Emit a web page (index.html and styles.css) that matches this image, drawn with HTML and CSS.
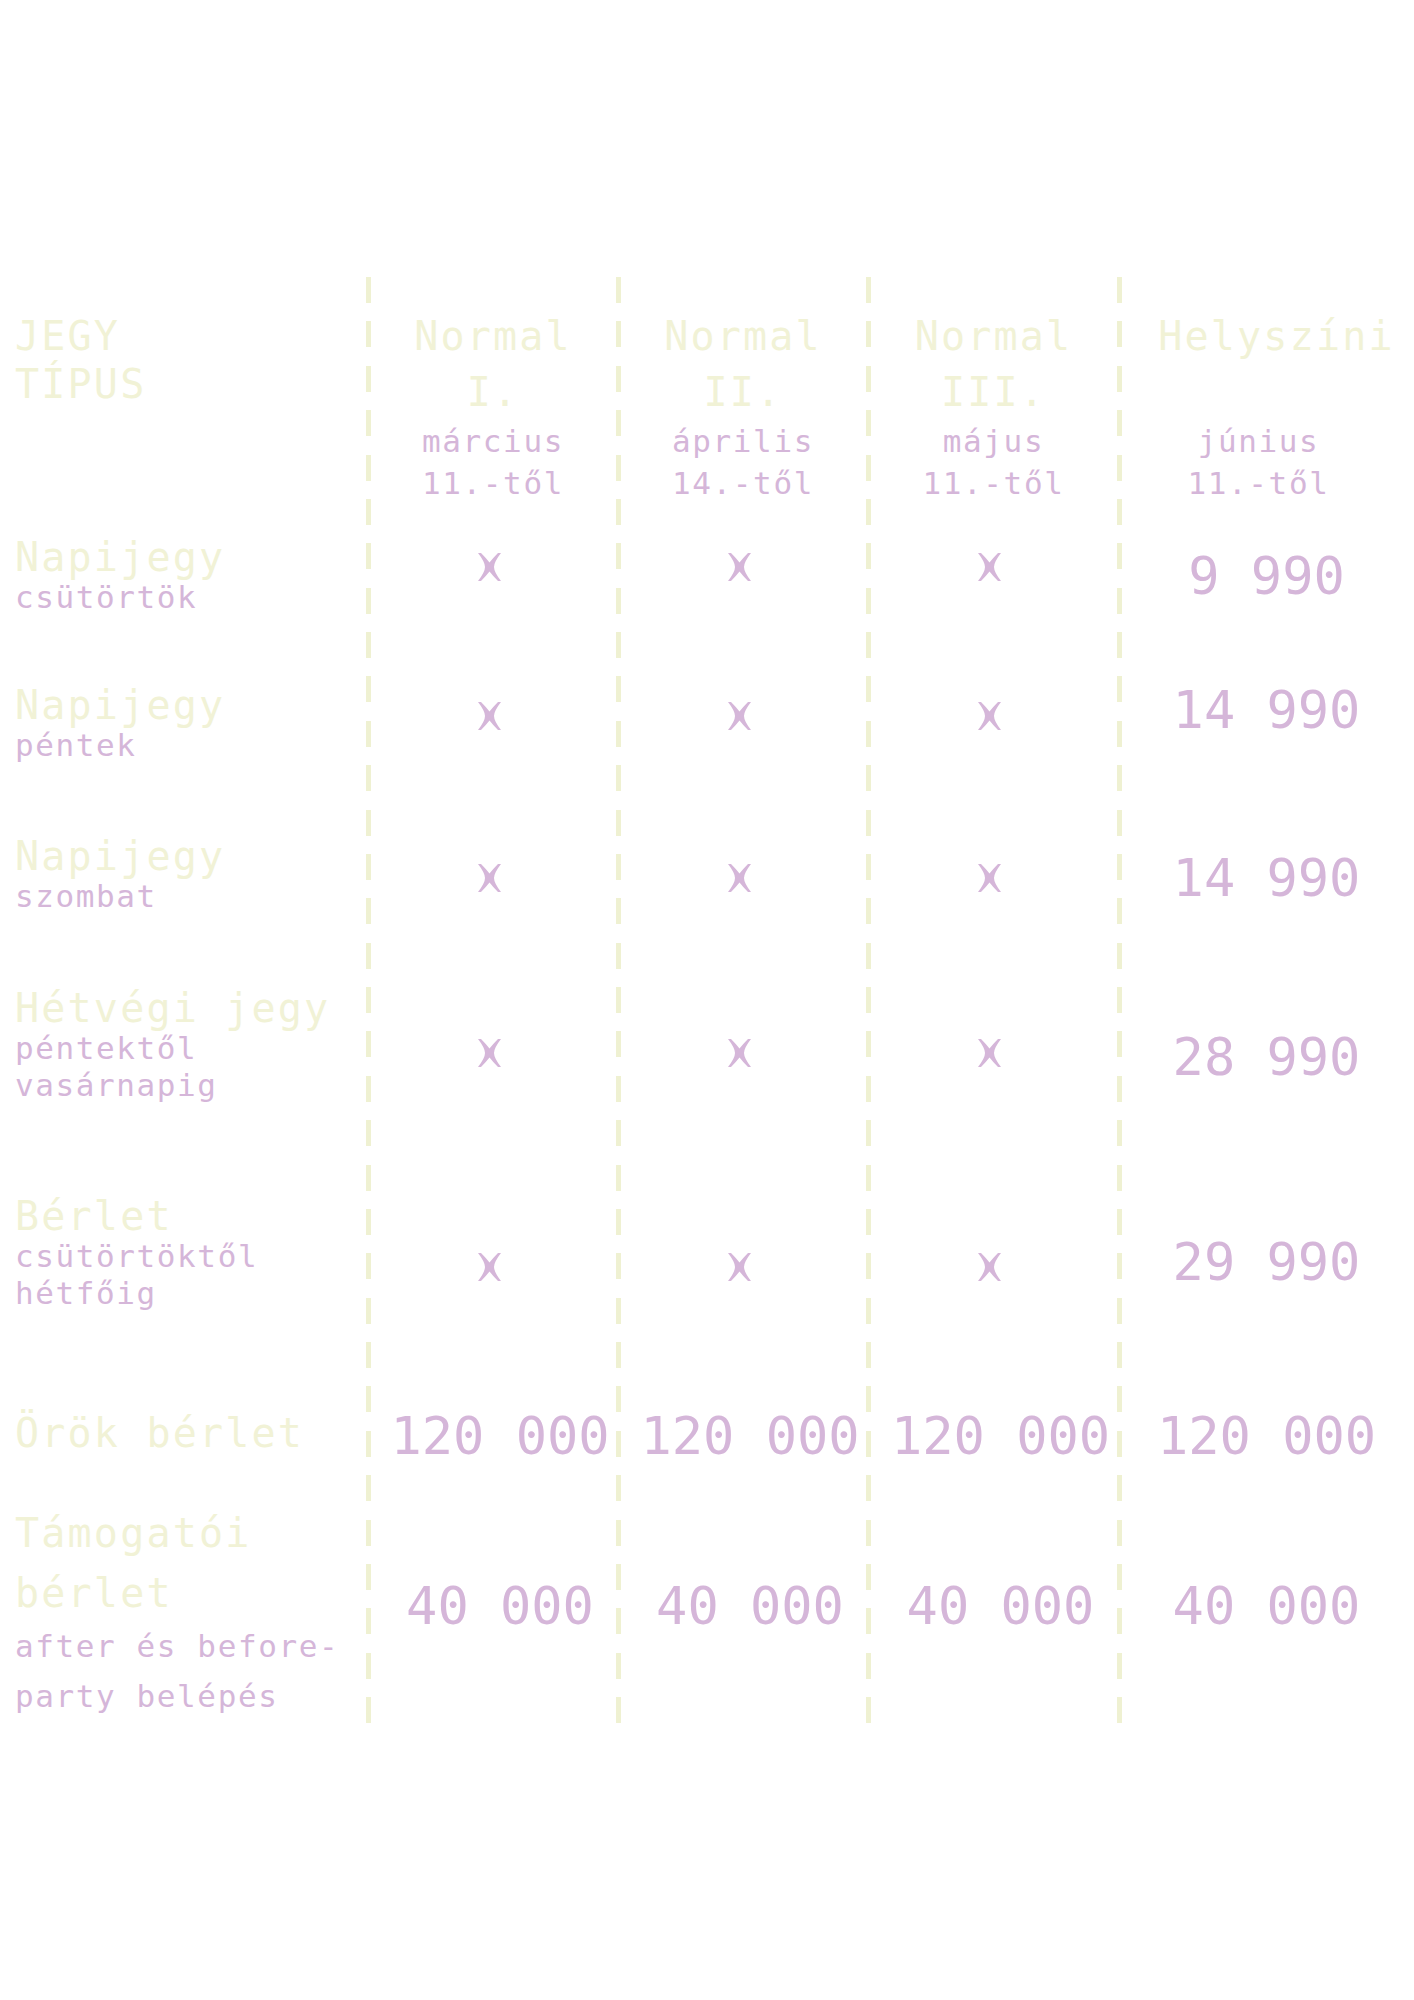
FILE: index.html
```html
<!DOCTYPE html>
<html lang="hu">
<head>
<meta charset="utf-8">
<title>Jegyárak</title>
<link rel="stylesheet" href="styles.css">
</head>
<body>
<main class="pricing">
  <!-- header row -->
  <div class="label label--head">
    <span class="big">JEGY</span>
    <span class="big">TÍPUS</span>
  </div>
  <div class="head">
    <div class="head-title"><span>Normal</span><span>I.</span></div>
    <span class="sub">március</span>
    <span class="sub">11.-től</span>
  </div>
  <div class="head">
    <div class="head-title"><span>Normal</span><span>II.</span></div>
    <span class="sub">április</span>
    <span class="sub">14.-től</span>
  </div>
  <div class="head">
    <div class="head-title"><span>Normal</span><span>III.</span></div>
    <span class="sub">május</span>
    <span class="sub">11.-től</span>
  </div>
  <div class="head head--last">
    <div class="head-title"><span>Helyszíni</span></div>
    <span class="sub">június</span>
    <span class="sub">11.-től</span>
  </div>

  <!-- Napijegy csütörtök -->
  <div class="label label--r1"><span class="big">Napijegy</span><span class="sub">csütörtök</span></div>
  <div class="mark mark--up"><svg class="x" viewBox="0 0 23 28"><path d="M0,0 L3,0 Q8,5 11.5,9.5 Q15,5 20,0 L23,0 Q16,9 16,14 Q16,19 23,28 L20,28 Q15,23 11.5,18.5 Q8,23 3,28 L0,28 Q7,19 7,14 Q7,9 0,0 Z"/></svg></div>
  <div class="mark mark--up"><svg class="x" viewBox="0 0 23 28"><path d="M0,0 L3,0 Q8,5 11.5,9.5 Q15,5 20,0 L23,0 Q16,9 16,14 Q16,19 23,28 L20,28 Q15,23 11.5,18.5 Q8,23 3,28 L0,28 Q7,19 7,14 Q7,9 0,0 Z"/></svg></div>
  <div class="mark mark--up"><svg class="x" viewBox="0 0 23 28"><path d="M0,0 L3,0 Q8,5 11.5,9.5 Q15,5 20,0 L23,0 Q16,9 16,14 Q16,19 23,28 L20,28 Q15,23 11.5,18.5 Q8,23 3,28 L0,28 Q7,19 7,14 Q7,9 0,0 Z"/></svg></div>
  <div class="price price--last">9&nbsp;990</div>

  <!-- Napijegy péntek -->
  <div class="label label--r2"><span class="big">Napijegy</span><span class="sub">péntek</span></div>
  <div class="mark mark--down"><svg class="x" viewBox="0 0 23 28"><path d="M0,0 L3,0 Q8,5 11.5,9.5 Q15,5 20,0 L23,0 Q16,9 16,14 Q16,19 23,28 L20,28 Q15,23 11.5,18.5 Q8,23 3,28 L0,28 Q7,19 7,14 Q7,9 0,0 Z"/></svg></div>
  <div class="mark mark--down"><svg class="x" viewBox="0 0 23 28"><path d="M0,0 L3,0 Q8,5 11.5,9.5 Q15,5 20,0 L23,0 Q16,9 16,14 Q16,19 23,28 L20,28 Q15,23 11.5,18.5 Q8,23 3,28 L0,28 Q7,19 7,14 Q7,9 0,0 Z"/></svg></div>
  <div class="mark mark--down"><svg class="x" viewBox="0 0 23 28"><path d="M0,0 L3,0 Q8,5 11.5,9.5 Q15,5 20,0 L23,0 Q16,9 16,14 Q16,19 23,28 L20,28 Q15,23 11.5,18.5 Q8,23 3,28 L0,28 Q7,19 7,14 Q7,9 0,0 Z"/></svg></div>
  <div class="price price--last">14&nbsp;990</div>

  <!-- Napijegy szombat -->
  <div class="label label--r3"><span class="big">Napijegy</span><span class="sub">szombat</span></div>
  <div class="mark"><svg class="x" viewBox="0 0 23 28"><path d="M0,0 L3,0 Q8,5 11.5,9.5 Q15,5 20,0 L23,0 Q16,9 16,14 Q16,19 23,28 L20,28 Q15,23 11.5,18.5 Q8,23 3,28 L0,28 Q7,19 7,14 Q7,9 0,0 Z"/></svg></div>
  <div class="mark"><svg class="x" viewBox="0 0 23 28"><path d="M0,0 L3,0 Q8,5 11.5,9.5 Q15,5 20,0 L23,0 Q16,9 16,14 Q16,19 23,28 L20,28 Q15,23 11.5,18.5 Q8,23 3,28 L0,28 Q7,19 7,14 Q7,9 0,0 Z"/></svg></div>
  <div class="mark"><svg class="x" viewBox="0 0 23 28"><path d="M0,0 L3,0 Q8,5 11.5,9.5 Q15,5 20,0 L23,0 Q16,9 16,14 Q16,19 23,28 L20,28 Q15,23 11.5,18.5 Q8,23 3,28 L0,28 Q7,19 7,14 Q7,9 0,0 Z"/></svg></div>
  <div class="price price--last">14&nbsp;990</div>

  <!-- Hétvégi jegy -->
  <div class="label label--r4"><span class="big">Hétvégi jegy</span><span class="sub">péntektől vasárnapig</span></div>
  <div class="mark mark--up-sm"><svg class="x" viewBox="0 0 23 28"><path d="M0,0 L3,0 Q8,5 11.5,9.5 Q15,5 20,0 L23,0 Q16,9 16,14 Q16,19 23,28 L20,28 Q15,23 11.5,18.5 Q8,23 3,28 L0,28 Q7,19 7,14 Q7,9 0,0 Z"/></svg></div>
  <div class="mark mark--up-sm"><svg class="x" viewBox="0 0 23 28"><path d="M0,0 L3,0 Q8,5 11.5,9.5 Q15,5 20,0 L23,0 Q16,9 16,14 Q16,19 23,28 L20,28 Q15,23 11.5,18.5 Q8,23 3,28 L0,28 Q7,19 7,14 Q7,9 0,0 Z"/></svg></div>
  <div class="mark mark--up-sm"><svg class="x" viewBox="0 0 23 28"><path d="M0,0 L3,0 Q8,5 11.5,9.5 Q15,5 20,0 L23,0 Q16,9 16,14 Q16,19 23,28 L20,28 Q15,23 11.5,18.5 Q8,23 3,28 L0,28 Q7,19 7,14 Q7,9 0,0 Z"/></svg></div>
  <div class="price price--last">28&nbsp;990</div>

  <!-- Bérlet -->
  <div class="label label--r5"><span class="big">Bérlet</span><span class="sub">csütörtöktől hétfőig</span></div>
  <div class="mark mark--down"><svg class="x" viewBox="0 0 23 28"><path d="M0,0 L3,0 Q8,5 11.5,9.5 Q15,5 20,0 L23,0 Q16,9 16,14 Q16,19 23,28 L20,28 Q15,23 11.5,18.5 Q8,23 3,28 L0,28 Q7,19 7,14 Q7,9 0,0 Z"/></svg></div>
  <div class="mark mark--down"><svg class="x" viewBox="0 0 23 28"><path d="M0,0 L3,0 Q8,5 11.5,9.5 Q15,5 20,0 L23,0 Q16,9 16,14 Q16,19 23,28 L20,28 Q15,23 11.5,18.5 Q8,23 3,28 L0,28 Q7,19 7,14 Q7,9 0,0 Z"/></svg></div>
  <div class="mark mark--down"><svg class="x" viewBox="0 0 23 28"><path d="M0,0 L3,0 Q8,5 11.5,9.5 Q15,5 20,0 L23,0 Q16,9 16,14 Q16,19 23,28 L20,28 Q15,23 11.5,18.5 Q8,23 3,28 L0,28 Q7,19 7,14 Q7,9 0,0 Z"/></svg></div>
  <div class="price price--last">29&nbsp;990</div>

  <!-- Örök bérlet -->
  <div class="label label--r6"><span class="big">Örök bérlet</span></div>
  <div class="price">120&nbsp;000</div>
  <div class="price">120&nbsp;000</div>
  <div class="price">120&nbsp;000</div>
  <div class="price price--last">120&nbsp;000</div>

  <!-- Támogatói bérlet -->
  <div class="label label--r7"><span class="big">Támogatói bérlet</span><span class="sub">after és before-party belépés</span></div>
  <div class="price">40&nbsp;000</div>
  <div class="price">40&nbsp;000</div>
  <div class="price">40&nbsp;000</div>
  <div class="price price--last">40&nbsp;000</div>
</main>
</body>
</html>
```

FILE: styles.css
```css
:root {
  --cream: #f1f2d6;
  --dash: #eff1d2;
  --lilac: #d5b6d9;
  --dash-line: repeating-linear-gradient(to bottom, var(--dash) 0 26px, transparent 26px 44.375px);
}

* {
  box-sizing: border-box;
}

html, body {
  margin: 0;
  padding: 0;
  background: #ffffff;
}

body {
  height: 2000px;
  font-family: "DejaVu Sans Mono", "Liberation Mono", monospace;
}

.pricing {
  margin-top: 277px;
  display: grid;
  grid-template-columns: 368px 250px 250px 251px 1fr;
  grid-template-rows: 238px 121px 148px 188px 169px 241px 107px 234px;
  background-image: var(--dash-line), var(--dash-line), var(--dash-line), var(--dash-line);
  background-size: 5px 100%;
  background-repeat: no-repeat;
  background-position: 366px 0, 616px 0, 866px 0, 1117px 0;
}

/* text styles */
.big {
  display: block;
  font-size: 40px;
  line-height: 44px;
  letter-spacing: 2.2px;
  color: var(--cream);
}

.sub {
  display: block;
  font-size: 31px;
  line-height: 37px;
  letter-spacing: 1.6px;
  color: var(--lilac);
}

/* left column labels */
.label {
  padding: 0 10px 0 15px;
}

.label--head { padding-top: 35px; }
.label--head .big { line-height: 48px; }
.label--r1 { padding-top: 20px; }
.label--r2 { padding-top: 47px; }
.label--r3 { padding-top: 50px; }
.label--r4 { padding-top: 14px; }
.label--r5 { padding-top: 53px; }
.label--r6 { padding-top: 29px; }
.label--r7 { padding-top: 14px; }
.label--r7 .big { line-height: 60px; }
.label--r7 .sub { line-height: 50px; margin-top: -2px; }

/* column headers */
.head {
  display: flex;
  flex-direction: column;
  align-items: center;
  padding-top: 31px;
  text-align: center;
}

.head-title {
  min-height: 112px;
  display: flex;
  flex-direction: column;
  align-items: center;
  font-size: 40px;
  line-height: 56px;
  letter-spacing: 2.2px;
  color: var(--cream);
  white-space: nowrap;
}

.head .sub {
  line-height: 42px;
}

.head--last .head-title {
  padding-left: 20px;
}

.head--last .sub {
  padding-right: 16px;
}

/* not-available marks */
.mark {
  display: flex;
  align-items: center;
  justify-content: center;
  padding-right: 8px;
}

.mark--up { padding-bottom: 17px; }
.mark--up-sm { padding-bottom: 7px; }
.mark--down { padding-top: 11px; }

.x {
  width: 23px;
  height: 28px;
  fill: var(--lilac);
}

/* prices */
.price {
  display: flex;
  align-items: center;
  justify-content: center;
  padding-left: 14px;
  font-size: 52px;
  line-height: 52px;
  color: var(--lilac);
  white-space: nowrap;
}

.price--last {
  padding-left: 0;
}
```
